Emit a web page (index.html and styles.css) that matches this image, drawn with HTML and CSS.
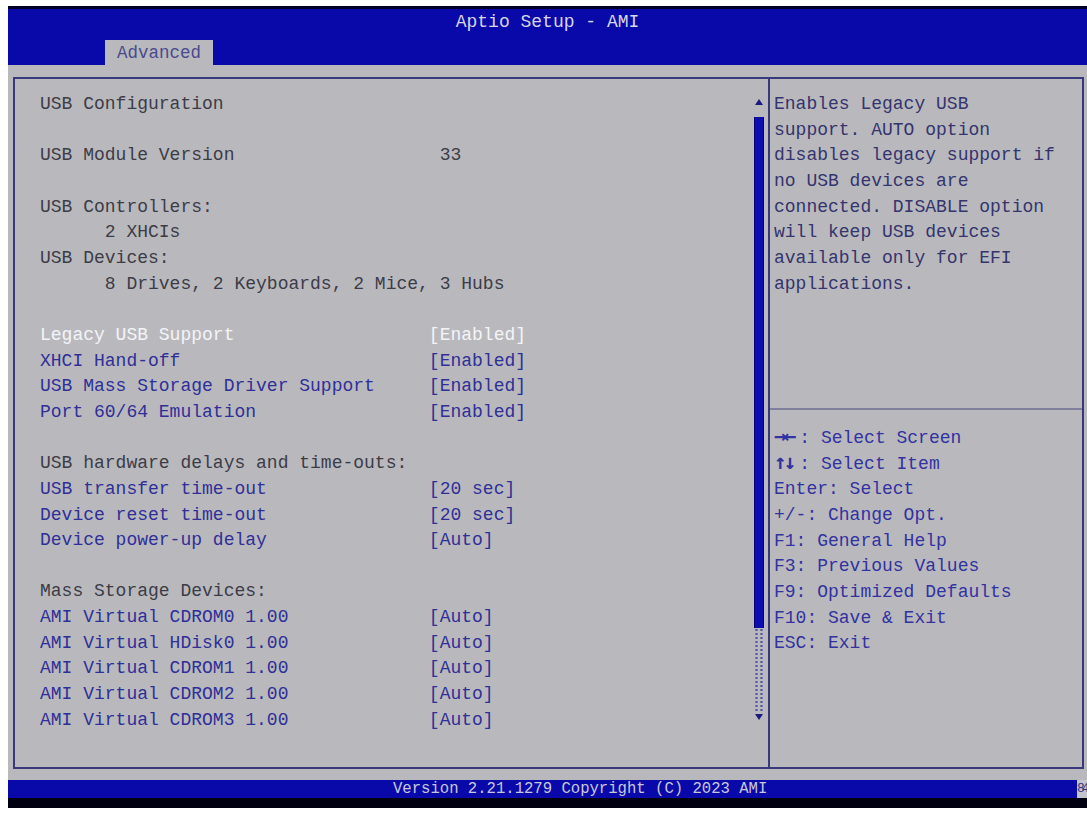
FILE: index.html
```html
<!DOCTYPE html>
<html>
<head>
<meta charset="utf-8">
<title>Aptio Setup - AMI</title>
<link rel="stylesheet" href="styles.css">
</head>
<body>
<div class="screen">
  <div class="header">
    <div class="title">Aptio Setup - AMI</div>
    <div class="tabs"><div class="tab">Advanced</div></div>
  </div>
  <div class="main">
    <div class="panel">
      <div class="left">
        <div class="rows">
          <div class="row st">USB Configuration</div>
          <div class="row"></div>
          <div class="row st"><span class="lbl">USB Module Version</span><span class="val num">33</span></div>
          <div class="row"></div>
          <div class="row st">USB Controllers:</div>
          <div class="row st ind">2 XHCIs</div>
          <div class="row st">USB Devices:</div>
          <div class="row st ind">8 Drives, 2 Keyboards, 2 Mice, 3 Hubs</div>
          <div class="row"></div>
          <div class="row hl"><span class="lbl">Legacy USB Support</span><span class="val">[Enabled]</span></div>
          <div class="row sel"><span class="lbl">XHCI Hand-off</span><span class="val">[Enabled]</span></div>
          <div class="row sel"><span class="lbl">USB Mass Storage Driver Support</span><span class="val">[Enabled]</span></div>
          <div class="row sel"><span class="lbl">Port 60/64 Emulation</span><span class="val">[Enabled]</span></div>
          <div class="row"></div>
          <div class="row st">USB hardware delays and time-outs:</div>
          <div class="row sel"><span class="lbl">USB transfer time-out</span><span class="val">[20 sec]</span></div>
          <div class="row sel"><span class="lbl">Device reset time-out</span><span class="val">[20 sec]</span></div>
          <div class="row sel"><span class="lbl">Device power-up delay</span><span class="val">[Auto]</span></div>
          <div class="row"></div>
          <div class="row st">Mass Storage Devices:</div>
          <div class="row sel"><span class="lbl">AMI Virtual CDROM0 1.00</span><span class="val">[Auto]</span></div>
          <div class="row sel"><span class="lbl">AMI Virtual HDisk0 1.00</span><span class="val">[Auto]</span></div>
          <div class="row sel"><span class="lbl">AMI Virtual CDROM1 1.00</span><span class="val">[Auto]</span></div>
          <div class="row sel"><span class="lbl">AMI Virtual CDROM2 1.00</span><span class="val">[Auto]</span></div>
          <div class="row sel"><span class="lbl">AMI Virtual CDROM3 1.00</span><span class="val">[Auto]</span></div>
        </div>
        <div class="scrollbar">
          <svg class="arrow" width="10" height="10" viewBox="0 0 10 10"><polygon points="5,2 9,8 1,8" fill="#1a1a80"/></svg>
          <div class="thumb"></div>
          <div class="track"></div>
          <svg class="arrow" width="10" height="10" viewBox="0 0 10 10"><polygon points="1,2 9,2 5,8" fill="#1a1a80"/></svg>
        </div>
      </div>
      <div class="right">
        <div class="help">
          <div class="hline">Enables Legacy USB</div>
          <div class="hline">support. AUTO option</div>
          <div class="hline">disables legacy support if</div>
          <div class="hline">no USB devices are</div>
          <div class="hline">connected. DISABLE option</div>
          <div class="hline">will keep USB devices</div>
          <div class="hline">available only for EFI</div>
          <div class="hline">applications.</div>
        </div>
        <div class="keys">
          <div class="kline"><span class="arr">→←</span>: Select Screen</div>
          <div class="kline"><span class="arr">↑↓</span>: Select Item</div>
          <div class="kline">Enter: Select</div>
          <div class="kline">+/-: Change Opt.</div>
          <div class="kline">F1: General Help</div>
          <div class="kline">F3: Previous Values</div>
          <div class="kline">F9: Optimized Defaults</div>
          <div class="kline">F10: Save &amp; Exit</div>
          <div class="kline">ESC: Exit</div>
        </div>
      </div>
    </div>
  </div>
  <div class="footer">
    <div class="version">Version 2.21.1279 Copyright (C) 2023 AMI</div>
    <div class="badge">84</div>
  </div>
  <div class="bottom"></div>
</div>
</body>
</html>
```

FILE: styles.css
```css
html, body {
  margin: 0;
  padding: 0;
  background: #ffffff;
}

.screen {
  margin: 6px 0 0 8px;
  width: 1079px;
  height: 802px;
  display: flex;
  flex-direction: column;
  background: #b9b9bd;
  font-family: "Liberation Mono", "DejaVu Sans Mono", monospace;
  font-size: 18px;
}

.header {
  height: 56px;
  border-top: 3px solid #00002a;
  background: #0909aa;
  display: flex;
  flex-direction: column;
  justify-content: space-between;
}

.title {
  margin-top: 3px;
  text-align: center;
  color: #d6d6e6;
  line-height: 20px;
}

.tabs {
  display: flex;
  padding-left: 97px;
}

.tab {
  width: 96px;
  height: 25px;
  padding-left: 12px;
  background: #b9b9bd;
  color: #4a4a8e;
  line-height: 26px;
  font-size: 17.5px;
}

.main {
  flex: 1;
  padding: 12px 3px 11px 5px;
  display: flex;
}

.panel {
  flex: 1;
  border: 2px solid #38387c;
  display: flex;
}

.left {
  width: 755px;
  display: flex;
  padding-left: 25px;
  box-sizing: border-box;
  border-right: 2px solid #38387c;
}

.rows {
  flex: 1;
  padding-top: 13px;
}

.row {
  height: 25.67px;
  line-height: 25.67px;
  white-space: pre;
  display: flex;
}

.lbl {
  width: 36ch;
}

.val.num {
  padding-left: 1ch;
}

.st {
  color: #3c3c48;
}

.sel {
  color: #2f2f98;
}

.hl {
  color: #f4f4f8;
}

.ind {
  padding-left: 6ch;
}

.scrollbar {
  width: 10px;
  margin-right: 4px;
  padding-top: 18px;
  display: flex;
  flex-direction: column;
}

.arrow {
  display: block;
}

.thumb {
  height: 511px;
  margin-top: 10px;
  background: #0c0cb0;
  border-left: 1px solid #050570;
  border-right: 1px solid #050570;
  box-sizing: border-box;
}

.track {
  height: 84px;
  background-image: radial-gradient(circle, #5a5aa8 1px, transparent 1.4px);
  background-size: 5px 4px;
}

.right {
  flex: 1;
  display: flex;
  flex-direction: column;
}

.help {
  height: 331px;
  padding: 13px 0 0 4px;
  box-sizing: border-box;
  border-bottom: 2px solid #80809c;
  color: #34346e;
}

.hline, .kline {
  height: 25.67px;
  line-height: 25.67px;
  white-space: pre;
}

.keys {
  padding: 16px 0 0 4px;
  color: #3232a0;
}

.arr {
  display: inline-block;
  width: 2ch;
  font-family: "DejaVu Sans Mono", monospace;
  font-weight: bold;
  font-size: 21px;
  letter-spacing: -3px;
  line-height: 20px;
}

.footer {
  height: 18px;
  background: #0909aa;
  display: flex;
  align-items: center;
}

.version {
  margin-left: 385px;
  color: #c8c8da;
  font-size: 15.6px;
  line-height: 18px;
  white-space: pre;
}

.badge {
  margin-left: auto;
  width: 10px;
  height: 18px;
  overflow: hidden;
  background: #c4c4cc;
  color: #36367a;
  font-size: 13px;
  line-height: 18px;
  letter-spacing: -3px;
}

.bottom {
  height: 10px;
  background: #000010;
}
```
